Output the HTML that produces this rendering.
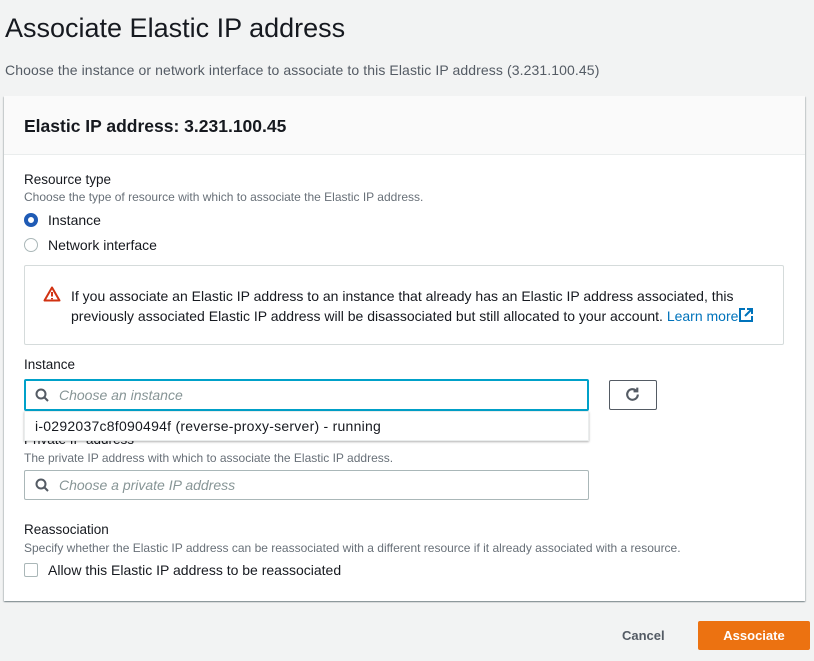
<!DOCTYPE html>
<html><head><meta charset="utf-8"><style>
*{box-sizing:border-box;margin:0;padding:0}
body{width:814px;height:661px;background:#f2f3f3;font-family:"Liberation Sans",sans-serif;color:#16191f;position:relative;overflow:hidden}
.a{position:absolute;white-space:nowrap}
.panel{position:absolute;left:4px;top:96px;width:801px;height:505px;background:#fff;box-shadow:0 1px 1px rgba(0,28,36,.3),1px 1px 1px rgba(0,28,36,.15),-1px 1px 1px rgba(0,28,36,.15)}
.hdr{position:absolute;left:0;top:0;width:801px;height:59px;background:#fafafa;border-bottom:1px solid #eaeded}
.lbl{font-size:13.5px;color:#16191f}
.desc{font-size:12px;color:#687078}
.inp{position:absolute;border:1px solid #aab7b8;border-radius:2px;background:#fff}
.ph{font-style:italic;color:#879596;font-size:14px}
</style></head><body>
<div class="a" style="left:5px;top:13px;font-size:27px;color:#16191f">Associate Elastic IP address</div>
<div class="a" style="left:5px;top:62px;font-size:14px;letter-spacing:0.1px;color:#545b64">Choose the instance or network interface to associate to this Elastic IP address (3.231.100.45)</div>
<div class="panel">
<div class="hdr"><div class="a" style="left:20px;top:20px;font-size:17.5px;font-weight:bold">Elastic IP address: 3.231.100.45</div></div>
</div>
<div class="a lbl" style="left:24px;top:172px">Resource type</div>
<div class="a desc" style="left:24px;top:190px">Choose the type of resource with which to associate the Elastic IP address.</div>
<div class="a" style="left:24px;top:213px;width:14px;height:14px;border-radius:50%;border:4px solid #1f5bb5"></div>
<div class="a lbl" style="left:48px;top:212px;font-size:14px">Instance</div>
<div class="a" style="left:24px;top:238px;width:14px;height:14px;border-radius:50%;border:1px solid #aab7b8"></div>
<div class="a lbl" style="left:48px;top:237px;font-size:14px">Network interface</div>
<div class="a" style="left:24px;top:265px;width:760px;height:80px;border:1px solid #d5dbdb;border-radius:2px;background:#fff"></div>
<svg class="a" style="left:43px;top:286px" width="18" height="16" viewBox="0 0 18 16"><path d="M9 1.5L1.5 14.5h15z" fill="none" stroke="#d13212" stroke-width="2" stroke-linejoin="round"/><path d="M9 6v4.5M9 12v1.2" stroke="#d13212" stroke-width="2"/></svg>
<div class="a" style="left:71px;top:286px;font-size:14px;color:#16191f;line-height:20px">If you associate an Elastic IP address to an instance that already has an Elastic IP address associated, this<br>previously associated Elastic IP address will be disassociated but still allocated to your account. <span style="color:#0073bb">Learn more</span><svg style="vertical-align:-2px" width="16" height="16" viewBox="0 0 16 16"><path d="M7 2H2v12h12V9M9 2h5v5M14 2L7 9" fill="none" stroke="#0073bb" stroke-width="2"/></svg></div>
<div class="a lbl" style="left:24px;top:357px">Instance</div>
<div class="inp" style="left:24px;top:379px;width:565px;height:32px;border:2px solid #00a1c9"></div>
<svg class="a" style="left:35px;top:388px" width="14" height="14" viewBox="0 0 14 14"><circle cx="6" cy="6" r="4.5" fill="none" stroke="#545b64" stroke-width="2"/><path d="M9.5 9.5L13 13" stroke="#545b64" stroke-width="2"/></svg>
<div class="a ph" style="left:59px;top:387px">Choose an instance</div>
<div class="a" style="left:609px;top:380px;width:48px;height:30px;border:1px solid #545b64;border-radius:2px;background:#fff"></div>
<svg class="a" style="left:624px;top:386px" width="17" height="17" viewBox="0 0 16 16"><path d="M13 8a5 5 0 1 1-1.5-3.6" fill="none" stroke="#545b64" stroke-width="2"/><path d="M12.5 1.5v3.5H9" fill="none" stroke="#545b64" stroke-width="2"/></svg>
<div class="a lbl" style="left:24px;top:432px">Private IP address</div>
<div class="a" style="left:24px;top:411px;width:565px;height:30px;background:#fff;box-shadow:0 1px 2px rgba(0,0,0,.3);border:1px solid #eaeded"></div>
<div class="a" style="left:35px;top:418px;font-size:14px;letter-spacing:0.25px">i-0292037c8f090494f (reverse-proxy-server) - running</div>
<div class="a desc" style="left:24px;top:451px">The private IP address with which to associate the Elastic IP address.</div>
<div class="inp" style="left:24px;top:470px;width:565px;height:30px"></div>
<svg class="a" style="left:35px;top:478px" width="14" height="14" viewBox="0 0 14 14"><circle cx="6" cy="6" r="4.5" fill="none" stroke="#545b64" stroke-width="2"/><path d="M9.5 9.5L13 13" stroke="#545b64" stroke-width="2"/></svg>
<div class="a ph" style="left:59px;top:477px">Choose a private IP address</div>
<div class="a lbl" style="left:24px;top:522px">Reassociation</div>
<div class="a desc" style="left:24px;top:541px">Specify whether the Elastic IP address can be reassociated with a different resource if it already associated with a resource.</div>
<div class="a" style="left:24px;top:563px;width:14px;height:14px;border:1px solid #aab7b8;border-radius:2px;background:#fff"></div>
<div class="a lbl" style="left:48px;top:562px;font-size:14px">Allow this Elastic IP address to be reassociated</div>
<div class="a" style="left:622px;top:628px;font-size:13px;font-weight:bold;color:#545b64">Cancel</div>
<div class="a" style="left:698px;top:621px;width:112px;height:29px;background:#ec7211;border-radius:2px;color:#fff;font-size:13px;font-weight:bold;text-align:center;line-height:29px">Associate</div>
</body></html>
